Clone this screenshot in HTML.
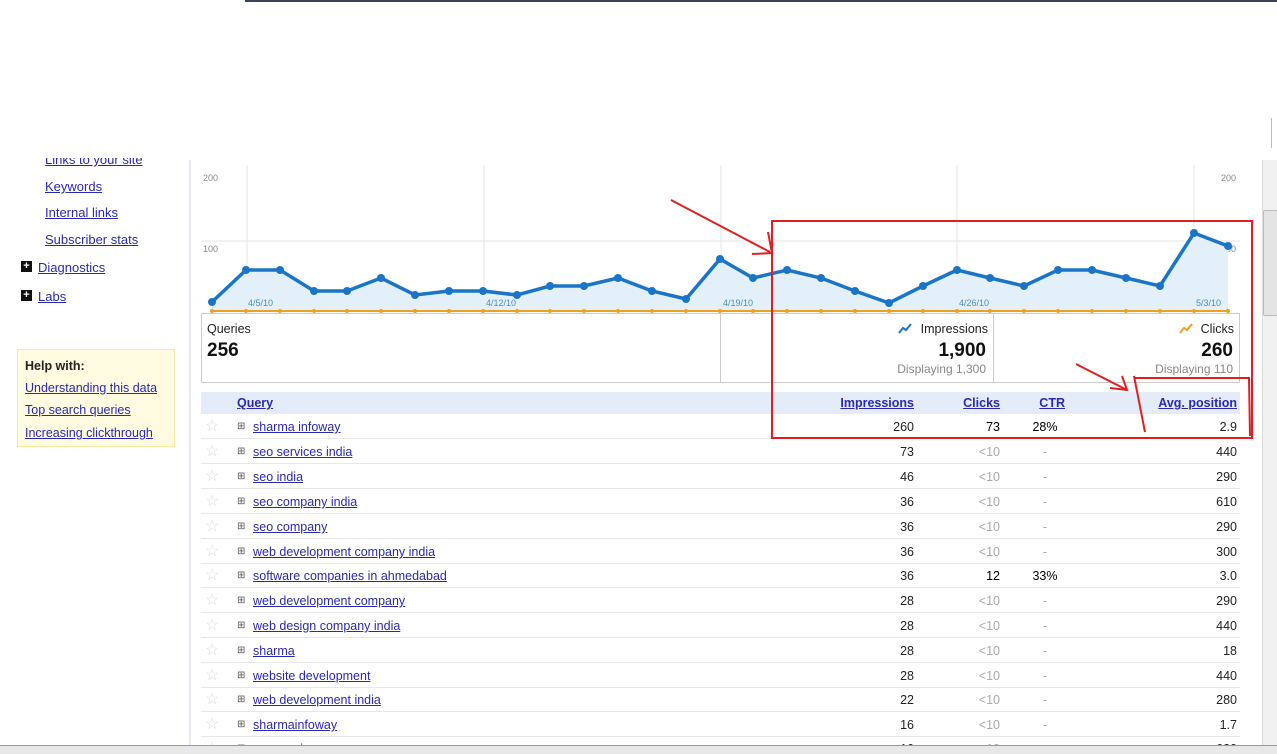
<!DOCTYPE html>
<html><head><style>
html,body{margin:0;width:1277px;height:754px;overflow:hidden}
body{background:#fff;font-family:"Liberation Sans",Arial,sans-serif;position:relative}
a{color:#2a2ab0;text-decoration:underline}
.abs{position:absolute}
.nav{font-size:13px;position:absolute}
.row{position:absolute;left:201px;width:1039px;height:24px;border-bottom:1px solid #e8e8e8;font-size:12.5px}
.row span{position:absolute;top:6px}
.st{left:4px;color:#ddd;font-size:16px;top:2px!important}
.px{left:36px;font-size:10px;color:#555;top:7px!important}
.q{left:52px;position:absolute;top:6px}
.i{right:326px;color:#222}
.c{right:240px}
.t{right:175px;width:40px;text-align:center}
.p{right:3px;color:#222}
.g{color:#aaa}
</style></head><body>
<div class="abs" style="left:245px;top:0;width:1032px;height:2px;background:#3a4656"></div>
<div class="abs" style="left:189px;top:160px;width:2px;height:590px;background:#e6ebf3"></div>
<a class="nav" style="left:45px;top:152px">Links to your site</a>
<div class="abs" style="left:0;top:140px;width:190px;height:18px;background:#fff"></div>
<a class="nav" style="left:45px;top:179px">Keywords</a>
<a class="nav" style="left:45px;top:205px">Internal links</a>
<a class="nav" style="left:45px;top:232px">Subscriber stats</a>
<div class="abs" style="left:21px;top:261px;width:11px;height:11px;background:#111;color:#fff;font-size:11px;line-height:11px;text-align:center;font-weight:bold">+</div>
<a class="nav" style="left:38px;top:260px">Diagnostics</a>
<div class="abs" style="left:21px;top:290px;width:11px;height:11px;background:#111;color:#fff;font-size:11px;line-height:11px;text-align:center;font-weight:bold">+</div>
<a class="nav" style="left:38px;top:289px">Labs</a>
<div class="abs" style="left:17px;top:349px;width:156px;height:96px;background:#fffbe0;border:1px solid #f5eaa0;font-size:12.5px">
<div style="position:absolute;left:7px;top:9px;font-weight:bold;color:#222">Help with:</div>
<a style="position:absolute;left:7px;top:31px">Understanding this data</a>
<a style="position:absolute;left:7px;top:53px">Top search queries</a>
<a style="position:absolute;left:7px;top:76px">Increasing clickthrough</a>
</div>
<svg class="abs" style="left:0;top:0" width="1277" height="754">
<g stroke="#e4e4e4" stroke-width="1">
<line x1="247" y1="165" x2="247" y2="311"/><line x1="484" y1="165" x2="484" y2="311"/><line x1="721" y1="165" x2="721" y2="311"/><line x1="957" y1="165" x2="957" y2="311"/><line x1="1194" y1="165" x2="1194" y2="311"/>
<line x1="201" y1="241" x2="1240" y2="241"/>
</g>
<g font-size="9" fill="#888"><text x="203" y="181">200</text><text x="203" y="252">100</text><text x="1221" y="181">200</text><text x="1221" y="252">100</text></g>
<polygon fill="#e3f0fa" points="212,302 246,270 280,270 314,291 347,291 381,278 415,295 449,291 483,291 517,295 550,286 584,286 618,278 652,291 686,299 720,259 753,278 787,270 821,278 855,291 889,303 923,286 957,270 990,278 1024,286 1058,270 1092,270 1126,278 1160,286 1194,233 1228,246 1228,311 212,311"/>
<g font-size="9" fill="#4a8ec0"><text x="248" y="306">4/5/10</text><text x="486" y="306">4/12/10</text><text x="723" y="306">4/19/10</text><text x="959" y="306">4/26/10</text><text x="1196" y="306">5/3/10</text></g>
<line x1="212" y1="311" x2="1228" y2="311" stroke="#f0a020" stroke-width="2"/>
<g fill="#f0a020"><circle cx="212" cy="311" r="2"/><circle cx="246" cy="311" r="2"/><circle cx="280" cy="311" r="2"/><circle cx="314" cy="311" r="2"/><circle cx="347" cy="311" r="2"/><circle cx="381" cy="311" r="2"/><circle cx="415" cy="311" r="2"/><circle cx="449" cy="311" r="2"/><circle cx="483" cy="311" r="2"/><circle cx="517" cy="311" r="2"/><circle cx="550" cy="311" r="2"/><circle cx="584" cy="311" r="2"/><circle cx="618" cy="311" r="2"/><circle cx="652" cy="311" r="2"/><circle cx="686" cy="311" r="2"/><circle cx="720" cy="311" r="2"/><circle cx="753" cy="311" r="2"/><circle cx="787" cy="311" r="2"/><circle cx="821" cy="311" r="2"/><circle cx="855" cy="311" r="2"/><circle cx="889" cy="311" r="2"/><circle cx="923" cy="311" r="2"/><circle cx="957" cy="311" r="2"/><circle cx="990" cy="311" r="2"/><circle cx="1024" cy="311" r="2"/><circle cx="1058" cy="311" r="2"/><circle cx="1092" cy="311" r="2"/><circle cx="1126" cy="311" r="2"/><circle cx="1160" cy="311" r="2"/><circle cx="1194" cy="311" r="2"/><circle cx="1228" cy="311" r="2"/></g>
<polyline fill="none" stroke="#1a75c8" stroke-width="3.5" points="212,302 246,270 280,270 314,291 347,291 381,278 415,295 449,291 483,291 517,295 550,286 584,286 618,278 652,291 686,299 720,259 753,278 787,270 821,278 855,291 889,303 923,286 957,270 990,278 1024,286 1058,270 1092,270 1126,278 1160,286 1194,233 1228,246"/>
<g fill="#1a75c8"><circle cx="212" cy="302" r="4"/><circle cx="246" cy="270" r="4"/><circle cx="280" cy="270" r="4"/><circle cx="314" cy="291" r="4"/><circle cx="347" cy="291" r="4"/><circle cx="381" cy="278" r="4"/><circle cx="415" cy="295" r="4"/><circle cx="449" cy="291" r="4"/><circle cx="483" cy="291" r="4"/><circle cx="517" cy="295" r="4"/><circle cx="550" cy="286" r="4"/><circle cx="584" cy="286" r="4"/><circle cx="618" cy="278" r="4"/><circle cx="652" cy="291" r="4"/><circle cx="686" cy="299" r="4"/><circle cx="720" cy="259" r="4"/><circle cx="753" cy="278" r="4"/><circle cx="787" cy="270" r="4"/><circle cx="821" cy="278" r="4"/><circle cx="855" cy="291" r="4"/><circle cx="889" cy="303" r="4"/><circle cx="923" cy="286" r="4"/><circle cx="957" cy="270" r="4"/><circle cx="990" cy="278" r="4"/><circle cx="1024" cy="286" r="4"/><circle cx="1058" cy="270" r="4"/><circle cx="1092" cy="270" r="4"/><circle cx="1126" cy="278" r="4"/><circle cx="1160" cy="286" r="4"/><circle cx="1194" cy="233" r="4"/><circle cx="1228" cy="246" r="4"/></g>
<rect x="201.5" y="313.5" width="1038" height="69" fill="#fff" stroke="#ccc"/>
<line x1="720.5" y1="313" x2="720.5" y2="383" stroke="#ccc"/>
<line x1="993.5" y1="313" x2="993.5" y2="383" stroke="#ccc"/>
<text x="207" y="333" font-size="12.5" fill="#222">Queries</text>
<text x="207" y="356" font-size="19" font-weight="bold" fill="#111">256</text>
<polyline points="899,333 903,328 906,330 911,324" fill="none" stroke="#1a75c8" stroke-width="2"/>
<text x="988" y="333" font-size="12.5" fill="#222" text-anchor="end">Impressions</text>
<text x="986" y="356" font-size="19" font-weight="bold" fill="#111" text-anchor="end">1,900</text>
<text x="986" y="373" font-size="12" fill="#888" text-anchor="end">Displaying 1,300</text>
<polyline points="1180,333 1184,328 1187,330 1192,324" fill="none" stroke="#f0a020" stroke-width="2"/>
<text x="1234" y="333" font-size="12.5" fill="#222" text-anchor="end">Clicks</text>
<text x="1233" y="356" font-size="19" font-weight="bold" fill="#111" text-anchor="end">260</text>
<text x="1233" y="373" font-size="12" fill="#888" text-anchor="end">Displaying 110</text>
<rect x="201" y="392" width="1039" height="22" fill="#e5ecf9"/>
</svg>
<a class="abs" style="left:237px;top:396px;font-size:12.5px;font-weight:bold">Query</a>
<a class="abs" style="right:363px;top:396px;font-size:12.5px;font-weight:bold">Impressions</a>
<a class="abs" style="right:277px;top:396px;font-size:12.5px;font-weight:bold">Clicks</a>
<a class="abs" style="right:212px;top:396px;font-size:12.5px;font-weight:bold">CTR</a>
<a class="abs" style="right:40px;top:396px;font-size:12.5px;font-weight:bold">Avg. position</a>
<div class="row" style="top:414px"><span class="st">☆</span><span class="px">⊞</span><a class="q">sharma infoway</a><span class="i">260</span><span class="c">73</span><span class="t">28%</span><span class="p">2.9</span></div>
<div class="row" style="top:439px"><span class="st">☆</span><span class="px">⊞</span><a class="q">seo services india</a><span class="i">73</span><span class="c g">&lt;10</span><span class="t g">-</span><span class="p">440</span></div>
<div class="row" style="top:464px"><span class="st">☆</span><span class="px">⊞</span><a class="q">seo india</a><span class="i">46</span><span class="c g">&lt;10</span><span class="t g">-</span><span class="p">290</span></div>
<div class="row" style="top:489px"><span class="st">☆</span><span class="px">⊞</span><a class="q">seo company india</a><span class="i">36</span><span class="c g">&lt;10</span><span class="t g">-</span><span class="p">610</span></div>
<div class="row" style="top:514px"><span class="st">☆</span><span class="px">⊞</span><a class="q">seo company</a><span class="i">36</span><span class="c g">&lt;10</span><span class="t g">-</span><span class="p">290</span></div>
<div class="row" style="top:539px"><span class="st">☆</span><span class="px">⊞</span><a class="q">web development company india</a><span class="i">36</span><span class="c g">&lt;10</span><span class="t g">-</span><span class="p">300</span></div>
<div class="row" style="top:563px"><span class="st">☆</span><span class="px">⊞</span><a class="q">software companies in ahmedabad</a><span class="i">36</span><span class="c">12</span><span class="t">33%</span><span class="p">3.0</span></div>
<div class="row" style="top:588px"><span class="st">☆</span><span class="px">⊞</span><a class="q">web development company</a><span class="i">28</span><span class="c g">&lt;10</span><span class="t g">-</span><span class="p">290</span></div>
<div class="row" style="top:613px"><span class="st">☆</span><span class="px">⊞</span><a class="q">web design company india</a><span class="i">28</span><span class="c g">&lt;10</span><span class="t g">-</span><span class="p">440</span></div>
<div class="row" style="top:638px"><span class="st">☆</span><span class="px">⊞</span><a class="q">sharma</a><span class="i">28</span><span class="c g">&lt;10</span><span class="t g">-</span><span class="p">18</span></div>
<div class="row" style="top:663px"><span class="st">☆</span><span class="px">⊞</span><a class="q">website development</a><span class="i">28</span><span class="c g">&lt;10</span><span class="t g">-</span><span class="p">440</span></div>
<div class="row" style="top:687px"><span class="st">☆</span><span class="px">⊞</span><a class="q">web development india</a><span class="i">22</span><span class="c g">&lt;10</span><span class="t g">-</span><span class="p">280</span></div>
<div class="row" style="top:712px"><span class="st">☆</span><span class="px">⊞</span><a class="q">sharmainfoway</a><span class="i">16</span><span class="c g">&lt;10</span><span class="t g">-</span><span class="p">1.7</span></div>
<div class="row" style="top:736px;height:9px;overflow:hidden;border:none"><span class="st">☆</span><span class="px">⊞</span><a class="q">seo services</a><span class="i">16</span><span class="c g">&lt;10</span><span class="t g">-</span><span class="p">620</span></div>
<svg class="abs" style="left:0;top:0" width="1277" height="754">
<g fill="none" stroke="#e02020" stroke-width="2">
<rect x="772" y="221" width="480" height="217"/>
<path d="M1134,378 L1249,378 L1250,436"/>
<path d="M1134,376 L1145,432"/>
<path d="M671,200 L770,252"/><path d="M768,232 L772,253 L752,254"/>
<path d="M1076,364 L1127,390"/><path d="M1110,388 L1127,390 L1122,376"/>
</g>
</svg>
<div class="abs" style="left:1262px;top:160px;width:15px;height:586px;background:#f0f0f0;border-left:1px solid #ddd"></div>
<div class="abs" style="left:1263px;top:210px;width:13px;height:104px;background:#e4e4e4;border:1px solid #bbb;border-radius:2px"></div>
<div class="abs" style="left:1271px;top:118px;width:6px;height:30px;border-left:1px solid #bbb"></div>
<div class="abs" style="left:0;top:745px;width:1277px;height:9px;background:#e8e8e8;border-top:1px solid #999"></div>
</body></html>
